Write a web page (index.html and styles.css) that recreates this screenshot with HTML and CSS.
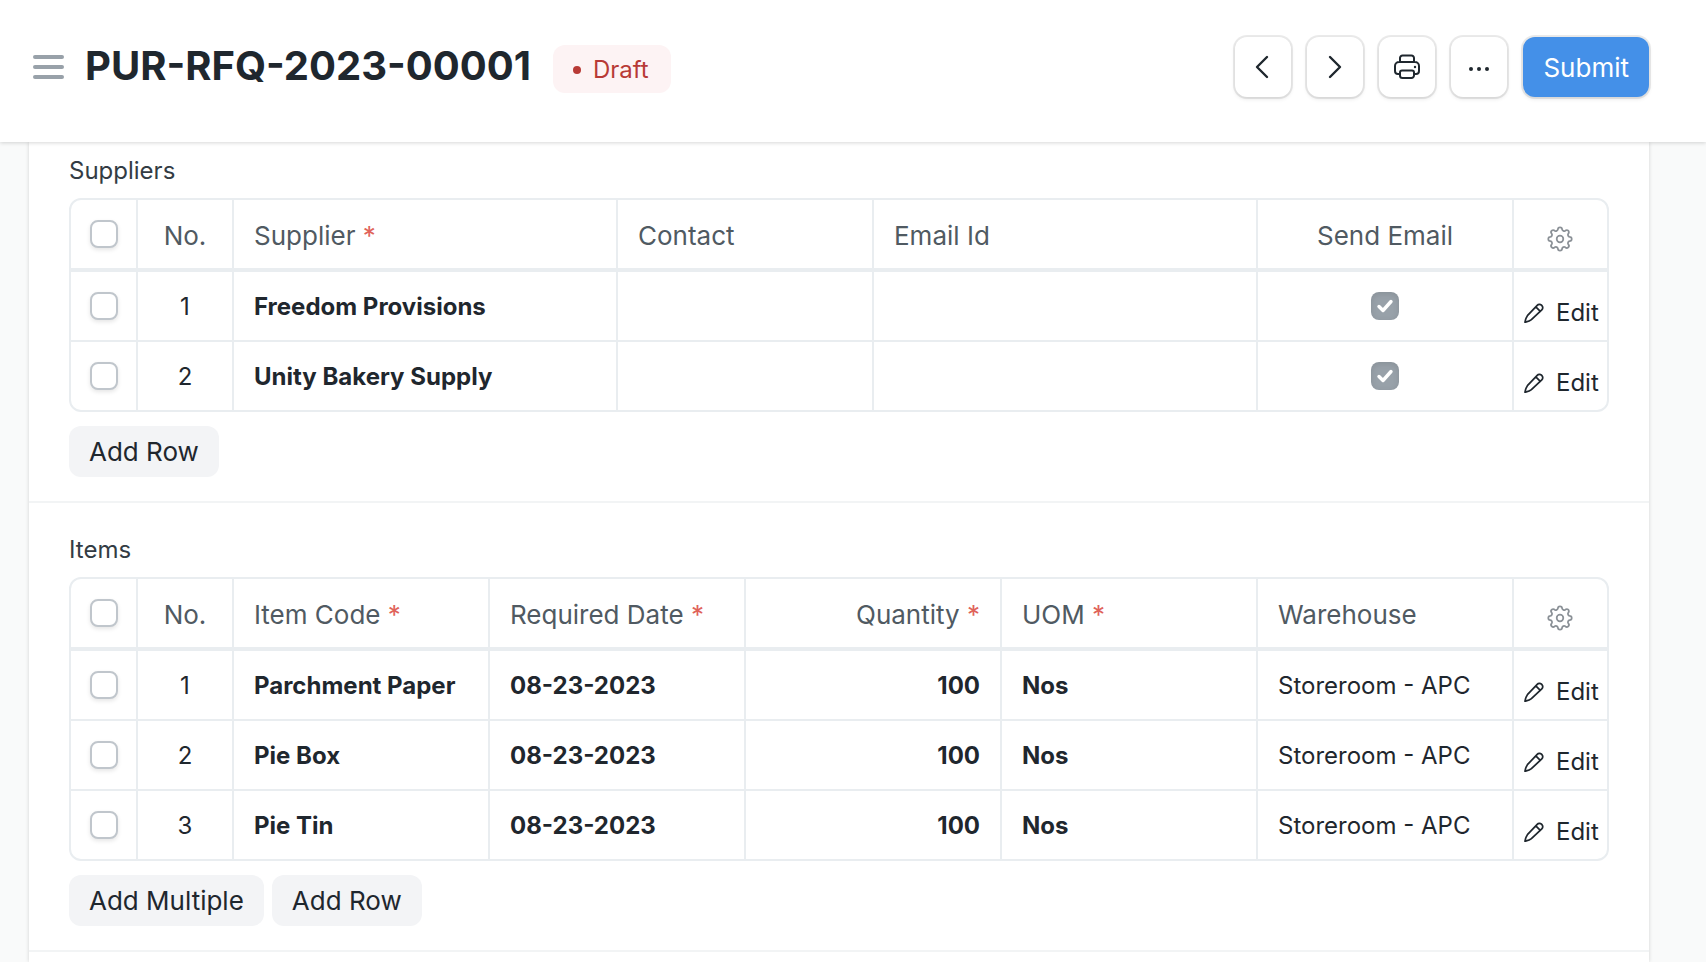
FILE: index.html
```html
<!DOCTYPE html>
<html lang="en">
<head>
<meta charset="utf-8">
<title>PUR-RFQ-2023-00001</title>
<link rel="stylesheet" href="styles.css">
</head>
<body>
<svg class="sprite" aria-hidden="true">
  <symbol id="i-gear" viewBox="-13 -13 26 26"><path d="M-2.1-9.6A2.1 2.1 0 0 1 2.1-9.6A2.1 2.1 0 0 0 5.3-8.27A2.1 2.1 0 0 1 8.27-5.3A2.1 2.1 0 0 0 9.6-2.1A2.1 2.1 0 0 1 9.6 2.1A2.1 2.1 0 0 0 8.27 5.3A2.1 2.1 0 0 1 5.3 8.27A2.1 2.1 0 0 0 2.1 9.6A2.1 2.1 0 0 1-2.1 9.6A2.1 2.1 0 0 0-5.3 8.27A2.1 2.1 0 0 1-8.27 5.3A2.1 2.1 0 0 0-9.6 2.1A2.1 2.1 0 0 1-9.6-2.1A2.1 2.1 0 0 0-8.27-5.3A2.1 2.1 0 0 1-5.3-8.27A2.1 2.1 0 0 0-2.1-9.6Z"/><circle r="3.3"/></symbol>
  <symbol id="i-pencil" viewBox="0 0 20 20"><path d="M1 19.200C1.500 16.600 1.900 14.500 3.400 12.700L13.200 2.300a3 3 0 0 1 4.300-.1l.4.400a3 3 0 0 1-.1 4.300L7.400 16.700C5.700 18.200 3.600 18.600 1 19.200zM11.800 3.800l4.500 4.500"/></symbol>
</svg>

<header class="page-head">
  <div class="title-area">
    <button class="menu" aria-label="Toggle sidebar"><span></span><span></span><span></span></button>
    <h1>PUR-RFQ-2023-00001</h1>
    <span class="pill">Draft</span>
  </div>
  <div class="actions">
    <button class="btn icon-btn" aria-label="Previous"><svg width="28" height="28" viewBox="0 0 28 28"><path d="M18 4L8 14l10 10" stroke-width="2.400"/></svg></button>
    <button class="btn icon-btn" aria-label="Next"><svg width="28" height="28" viewBox="0 0 28 28"><path d="M9 4l10 10L9 24" stroke-width="2.400"/></svg></button>
    <button class="btn icon-btn" aria-label="Print"><svg width="28" height="28" viewBox="0 0 28 28"><path d="M7 9V5a2.500 2.500 0 0 1 2.500-2.500h9A2.500 2.500 0 0 1 21 5v4M7 21H5a3 3 0 0 1-3-3v-5a4 4 0 0 1 4-4h16a4 4 0 0 1 4 4v5a3 3 0 0 1-3 3h-2M9 17.500h10a2 2 0 0 1 2 2v3a2.500 2.500 0 0 1-2.500 2.500h-9A2.500 2.500 0 0 1 7 22.500v-3a2 2 0 0 1 2-2z"/><circle class="dot" cx="22" cy="14" r="1.200"/></svg></button>
    <button class="btn icon-btn" aria-label="More"><svg width="28" height="28" viewBox="0 0 28 28"><g class="dot"><circle cx="6" cy="16" r="2"/><circle cx="14" cy="16" r="2"/><circle cx="22" cy="16" r="2"/></g></svg></button>
    <button class="btn primary">Submit</button>
  </div>
</header>

<main class="form-card">
  <section>
    <h2>Suppliers</h2>
    <div class="grid">
    <table aria-label="Suppliers">
      <colgroup><col class="c-check"><col class="c-no"><col class="w3"><col class="w2"><col class="w3"><col class="w2"><col class="c-edit"></colgroup>
      <thead><tr>
        <th class="mid"><input type="checkbox" aria-label="Select all suppliers"></th><th class="mid">No.</th><th>Supplier <b>*</b></th><th>Contact</th><th>Email Id</th><th class="mid">Send Email</th>
        <th class="mid tool"><button aria-label="Configure columns"><svg class="gear"><use href="#i-gear"/></svg></button></th>
      </tr></thead>
      <tbody>
        <tr><td class="mid"><input type="checkbox" aria-label="Select row 1"></td><td class="mid">1</td><td class="strong">Freedom Provisions</td><td></td><td></td><td class="mid"><input type="checkbox" class="ro" aria-label="Send email" checked></td><td class="tool"><button class="edit"><svg class="pencil"><use href="#i-pencil"/></svg>Edit</button></td></tr>
        <tr><td class="mid"><input type="checkbox" aria-label="Select row 2"></td><td class="mid">2</td><td class="strong">Unity Bakery Supply</td><td></td><td></td><td class="mid"><input type="checkbox" class="ro" aria-label="Send email" checked></td><td class="tool"><button class="edit"><svg class="pencil"><use href="#i-pencil"/></svg>Edit</button></td></tr>
      </tbody>
    </table>
    </div>
    <div class="grid-foot"><button>Add Row</button></div>
  </section>

  <section>
    <h2>Items</h2>
    <div class="grid">
    <table aria-label="Items">
      <colgroup><col class="c-check"><col class="c-no"><col class="w2"><col class="w2"><col class="w2"><col class="w2"><col class="w2"><col class="c-edit"></colgroup>
      <thead><tr>
        <th class="mid"><input type="checkbox" aria-label="Select all items"></th><th class="mid">No.</th><th>Item Code <b>*</b></th><th>Required Date <b>*</b></th><th class="num">Quantity <b>*</b></th><th>UOM <b>*</b></th><th>Warehouse</th>
        <th class="mid tool"><button aria-label="Configure columns"><svg class="gear"><use href="#i-gear"/></svg></button></th>
      </tr></thead>
      <tbody>
        <tr><td class="mid"><input type="checkbox" aria-label="Select row 1"></td><td class="mid">1</td><td class="strong">Parchment Paper</td><td class="strong">08-23-2023</td><td class="strong num">100</td><td class="strong">Nos</td><td>Storeroom - APC</td><td class="tool"><button class="edit"><svg class="pencil"><use href="#i-pencil"/></svg>Edit</button></td></tr>
        <tr><td class="mid"><input type="checkbox" aria-label="Select row 2"></td><td class="mid">2</td><td class="strong">Pie Box</td><td class="strong">08-23-2023</td><td class="strong num">100</td><td class="strong">Nos</td><td>Storeroom - APC</td><td class="tool"><button class="edit"><svg class="pencil"><use href="#i-pencil"/></svg>Edit</button></td></tr>
        <tr><td class="mid"><input type="checkbox" aria-label="Select row 3"></td><td class="mid">3</td><td class="strong">Pie Tin</td><td class="strong">08-23-2023</td><td class="strong num">100</td><td class="strong">Nos</td><td>Storeroom - APC</td><td class="tool"><button class="edit"><svg class="pencil"><use href="#i-pencil"/></svg>Edit</button></td></tr>
      </tbody>
    </table>
    </div>
    <div class="grid-foot"><button>Add Multiple</button><button>Add Row</button></div>
  </section>
</main>
</body>
</html>
```
FILE: styles.css
```css
* { box-sizing: border-box; }

body {
  margin: 0;
  min-height: 100vh;
  display: flex;
  flex-direction: column;
  overflow: hidden;
  background: #f9fafa;
  color: #1f272e;
  font: 24px/36px Inter, sans-serif;
}

button {
  border: 0;
  padding: 0;
  background: none;
  color: inherit;
  font: inherit;
  cursor: pointer;
}

svg {
  display: block;
  fill: none;
  stroke: currentColor;
  stroke-width: 2;
  stroke-linecap: round;
  stroke-linejoin: round;
}

.sprite { display: none; }
.dot { fill: currentColor; stroke: none; }

.page-head {
  position: relative;
  z-index: 1;
  display: flex;
  justify-content: space-between;
  padding: 37px 57px 45px 33px;
  background: #fff;
  box-shadow: 0 1px 4px rgba(0, 0, 0, 0.16);
}

.title-area { display: flex; align-items: center; }

.menu {
  display: flex;
  flex-direction: column;
  gap: 6px;
  width: 31px;
  margin-right: 21px;
}

.menu span { height: 4px; border-radius: 2px; background: #98a1a9; }

h1 { margin: 0 0 2px; font-size: 40px; line-height: 58px; font-weight: 700; }

.pill {
  display: flex;
  align-items: center;
  gap: 12px;
  height: 48px;
  margin: 4px 0 0 22px;
  padding: 2px 22px 0 20px;
  border-radius: 12px;
  background: #fdf3f4;
  color: #b83a36;
}

.pill::before {
  content: "";
  width: 8px;
  height: 8px;
  border-radius: 50%;
  background: currentColor;
}

.actions { display: flex; gap: 16px; }

.btn {
  display: grid;
  place-items: center;
  height: 60px;
  border-radius: 12px;
  background: #fff;
  box-shadow: 0 0 0 2px rgba(0, 0, 0, 0.08), 0 2px 4px rgba(0, 0, 0, 0.1);
}

.icon-btn { width: 56px; }
.primary { padding: 2px 20px 0; background: #4490e8; color: #fff; font-size: 26px; }

.form-card {
  flex: 1;
  margin: 0 57px 0 29px;
  background: #fff;
  box-shadow: 0 0 4px rgba(0, 0, 0, 0.16);
}

section { padding: 29px 40px 24px; border-bottom: 2px solid #f2f4f5; }
section:first-child { padding-top: 11px; }

h2 { margin: 0 0 9px; font-size: 24px; line-height: 36px; font-weight: 400; color: #333c44; }

.grid { border: 2px solid #e9edf0; border-radius: 12px; overflow: hidden; }

table { width: 100%; table-layout: fixed; border-collapse: separate; border-spacing: 0; }

.c-check { width: 67px; }
.c-no { width: 96px; }
.w2 { width: 20%; }
.w3 { width: 30%; }
.c-edit { width: 93px; }

th, td {
  height: 68px;
  padding: 0 20px;
  border-right: 2px solid #e9edf0;
  text-align: left;
  font-weight: 400;
  white-space: nowrap;
}

th { height: 72px; padding-top: 4px; border-bottom: 4px solid #e9edf0; font-size: 26px; color: #505a62; }
th b { font-weight: 400; color: #e0635a; }
td { padding-top: 2px; }
tbody tr + tr td { height: 70px; border-top: 2px solid #e9edf0; }
th:last-child, td:last-child { border-right: 0; }

.mid { padding-left: 0; padding-right: 0; text-align: center; }
.num { text-align: right; }
.strong { font-weight: 700; }

input[type="checkbox"] {
  appearance: none;
  display: block;
  width: 28px;
  height: 28px;
  margin: 0 auto 2px;
  border: 2px solid #c0c6cc;
  border-radius: 8px;
  background: #fff;
  box-shadow: 0 2px 4px rgba(0, 0, 0, 0.1);
}

th input[type="checkbox"] { margin-bottom: 4px; }

input.ro:checked {
  border: 0;
  background: #98a1a9 url("data:image/svg+xml,%3Csvg xmlns='http://www.w3.org/2000/svg' viewBox='0 0 28 28'%3E%3Cpath d='M8 14.500l4 4 8-9' fill='none' stroke='white' stroke-width='3.400' stroke-linecap='round' stroke-linejoin='round'/%3E%3C/svg%3E");
  box-shadow: inset 0 2px 6px rgba(0, 0, 0, 0.1);
}

.tool { padding: 0; }
th.tool { padding: 6px 2px 0 0; }
.gear { width: 26px; height: 26px; color: #8b9197; stroke-width: 1.75; }
.tool button { vertical-align: middle; }
.edit { display: flex; align-items: center; gap: 12px; margin: 14px 0 0 10px; }
.pencil { width: 20px; height: 20px; stroke-width: 1.75; }

.grid-foot { display: flex; gap: 8px; margin-top: 14px; }

.grid-foot button {
  padding: 6px 20px;
  border-radius: 12px;
  background: #f3f4f6;
  font-size: 26px;
  line-height: 39px;
}
```
